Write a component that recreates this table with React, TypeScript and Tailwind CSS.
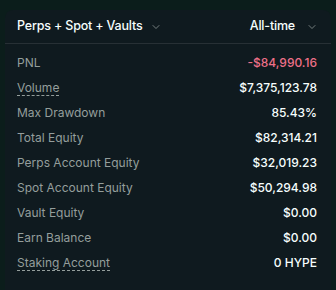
import { ChevronDown } from "lucide-react";

interface Row {
  label: string;
  value: string;
  dashed?: boolean;
  negative?: boolean;
}

const rows: Row[] = [
  { label: "PNL", value: "-$84,990.16", negative: true },
  { label: "Volume", value: "$7,375,123.78", dashed: true },
  { label: "Max Drawdown", value: "85.43%" },
  { label: "Total Equity", value: "$82,314.21" },
  { label: "Perps Account Equity", value: "$32,019.23" },
  { label: "Spot Account Equity", value: "$50,294.98" },
  { label: "Vault Equity", value: "$0.00" },
  { label: "Earn Balance", value: "$0.00" },
  { label: "Staking Account", value: "0 HYPE", dashed: true },
];

export default function App() {
  return (
    <div
      className="w-[336px] h-[290px] overflow-hidden bg-[#0b1d1b] pt-[10px] px-[5px]"
      style={{ fontFamily: "Inter, 'Noto Sans', sans-serif" }}
    >
      <div className="bg-[#0f1a1f] rounded-t-lg h-[300px]">
        <div className="flex items-center justify-between h-[34px] pl-3 pr-[13px] border-b border-[#273035]">
          <button className="flex items-center gap-[8px] text-[12.5px] font-medium tracking-[-0.015em] text-[#f6fefd]">
            Perps + Spot + Vaults
            <ChevronDown className="w-[12px] h-[12px] text-[#949e9c]" strokeWidth={1.5} />
          </button>
          <button className="flex items-center gap-[11px] text-[12.5px] font-medium tracking-[-0.015em] text-[#f6fefd]">
            All-time
            <ChevronDown className="w-[12px] h-[12px] text-[#949e9c]" strokeWidth={1.5} />
          </button>
        </div>
        <div className="flex flex-col pl-3 pr-[14px] pt-[6px]">
          {rows.map((r) => (
            <div key={r.label} className="flex items-center justify-between h-[25px] text-[12px]">
              <span
                className={`text-[#949e9c] ${r.dashed ? "underline decoration-dashed decoration-[#949e9c] underline-offset-[3px]" : ""}`}
              >
                {r.label}
              </span>
              <span className={`font-medium ${r.negative ? "text-[#ed7088]" : "text-[#f6fefd]"}`}>
                {r.value}
              </span>
            </div>
          ))}
        </div>
      </div>
    </div>
  );
}
